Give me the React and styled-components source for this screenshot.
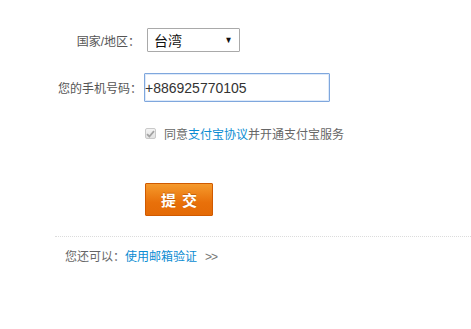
import React from 'react';
import styled, { createGlobalStyle } from 'styled-components';

const GlobalStyle = createGlobalStyle`
  html, body {
    margin: 0;
    padding: 0;
    background: #fff;
  }
  body {
    font-family: "Liberation Sans", "Noto Sans CJK SC", sans-serif;
    font-size: 12px;
    color: #666;
  }
`;

const Page = styled.div`
  width: 471px;
  height: 329px;
  padding-top: 28px;
  box-sizing: border-box;
  overflow: hidden;
`;

const Form = styled.div`
  display: flex;
  flex-direction: column;
`;

const Row = styled.div`
  display: flex;
  align-items: center;
  margin-top: ${(p) => p.top || 0}px;
`;

const Label = styled.label`
  width: ${(p) => p.width || 140}px;
  text-align: right;
  font-size: 12px;
  color: #555;
  flex-shrink: 0;
`;

const Field = styled.div`
  margin-left: ${(p) => p.gap || 0}px;
`;

const Select = styled.div`
  width: 93px;
  height: 24px;
  box-sizing: border-box;
  border: 1px solid #a9a9a9;
  border-radius: 1px;
  display: flex;
  align-items: center;
  justify-content: space-between;
  padding: 0 6px 0 6px;
  font-size: 14px;
  color: #111;
`;

const Arrow = styled.span`
  font-size: 9px;
  color: #111;
  transform: scaleX(0.9);
`;

const PhoneInput = styled.input`
  width: 186px;
  height: 29px;
  box-sizing: border-box;
  border: 1px solid #7fa7dd;
  border-radius: 1px;
  padding: 0;
  font-family: "Liberation Sans", Arial, sans-serif;
  font-size: 14px;
  color: #333;
  outline: none;
  box-shadow: inset 0 0 0 1px rgba(160, 195, 240, 0.35);
`;

const Indent = styled.div`
  padding-left: 145px;
  display: flex;
  align-items: center;
`;

const Check = styled.span`
  width: 11px;
  height: 11px;
  box-sizing: border-box;
  border: 1px solid #c9c9c9;
  border-radius: 2px;
  background: linear-gradient(#f4f4f4, #e2e2e2);
  display: flex;
  align-items: center;
  justify-content: center;
  margin-right: 8px;
`;

const Agree = styled.span`
  font-size: 12px;
  color: #666;
`;

const Link = styled.a`
  color: #0a8cd2;
  text-decoration: none;
  cursor: pointer;
`;

const Submit = styled.button`
  width: 68px;
  height: 33px;
  border: 1px solid #d05a00;
  border-radius: 1px;
  background: linear-gradient(#f59a2c, #e8700a 60%, #e46a06);
  color: #fff;
  font-family: "Noto Sans CJK SC", sans-serif;
  font-size: 15px;
  font-weight: bold;
  letter-spacing: 6px;
  padding: 0 0 0 6px;
  text-shadow: 0 -1px 0 rgba(160, 70, 0, 0.5);
  cursor: pointer;
`;

const Divider = styled.div`
  margin: 20px 0 0 55px;
  border-top: 1px dotted #dcdcdc;
`;

const Footer = styled.div`
  padding: 10px 0 0 65px;
  line-height: 20px;
  font-size: 12px;
  color: #666;
`;

const More = styled.span`
  margin-left: 8px;
  color: #777;
  letter-spacing: -1px;
`;

export default function App() {
  return (
    <Page>
      <GlobalStyle />
      <Form>
        <Row>
          <Label width={140}>国家/地区：</Label>
          <Field gap={7}>
            <Select>
              <span>台湾</span>
              <Arrow>▼</Arrow>
            </Select>
          </Field>
        </Row>
        <Row top={21}>
          <Label width={142}>您的手机号码：</Label>
          <Field gap={2}>
            <PhoneInput defaultValue="+886925770105" />
          </Field>
        </Row>
        <Row top={23}>
          <Indent>
            <Check>
              <svg width="9" height="8" viewBox="0 0 9 8">
                <path d="M1 4.2 L3.4 6.5 L8 1.2" fill="none" stroke="#a3a3a3" strokeWidth="1.8" />
              </svg>
            </Check>
            <Agree>
              同意<Link>支付宝协议</Link>并开通支付宝服务
            </Agree>
          </Indent>
        </Row>
        <Row top={41}>
          <Indent>
            <Submit>提交</Submit>
          </Indent>
        </Row>
      </Form>
      <Divider />
      <Footer>
        您还可以：<Link>使用邮箱验证</Link>
        <More>&gt;&gt;</More>
      </Footer>
    </Page>
  );
}
